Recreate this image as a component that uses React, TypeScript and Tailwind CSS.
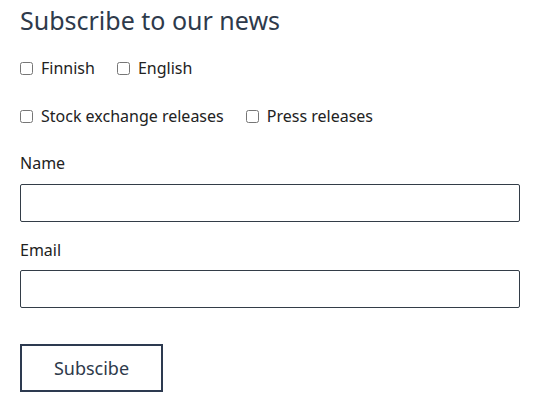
export default function App() {
  const font = { fontFamily: '"Noto Sans", "Open Sans", sans-serif' };
  return (
    <div className="bg-white w-[538px] h-[407px] px-5 pt-1 text-[#222]" style={font}>
      <h2 className="text-[25px] leading-[32px] text-[#2e3a4b]">Subscribe to our news</h2>
      <div className="flex gap-[22px] mt-[20px] h-6 items-center text-[16px]">
        <label className="flex items-center gap-2">
          <input type="checkbox" className="w-[13px] h-[13px]" />
          Finnish
        </label>
        <label className="flex items-center gap-2">
          <input type="checkbox" className="w-[13px] h-[13px]" />
          English
        </label>
      </div>
      <div className="flex gap-[22px] mt-[24px] h-6 items-center text-[16px]">
        <label className="flex items-center gap-2">
          <input type="checkbox" className="w-[13px] h-[13px]" />
          Stock exchange releases
        </label>
        <label className="flex items-center gap-2">
          <input type="checkbox" className="w-[13px] h-[13px]" />
          Press releases
        </label>
      </div>
      <div className="mt-[23px] text-[16px] leading-6">Name</div>
      <input className="block mt-[9px] w-[500px] h-[38px] border border-[#333d47] rounded-[2px]" />
      <div className="mt-[16px] text-[16px] leading-6">Email</div>
      <input className="block mt-[8px] w-[500px] h-[38px] border border-[#333d47] rounded-[2px]" />
      <button className="block mt-[36px] w-[143px] h-[48px] border-2 border-[#2d3a50] text-[18px] text-[#2e3a4b]">
        Subscibe
      </button>
    </div>
  );
}
